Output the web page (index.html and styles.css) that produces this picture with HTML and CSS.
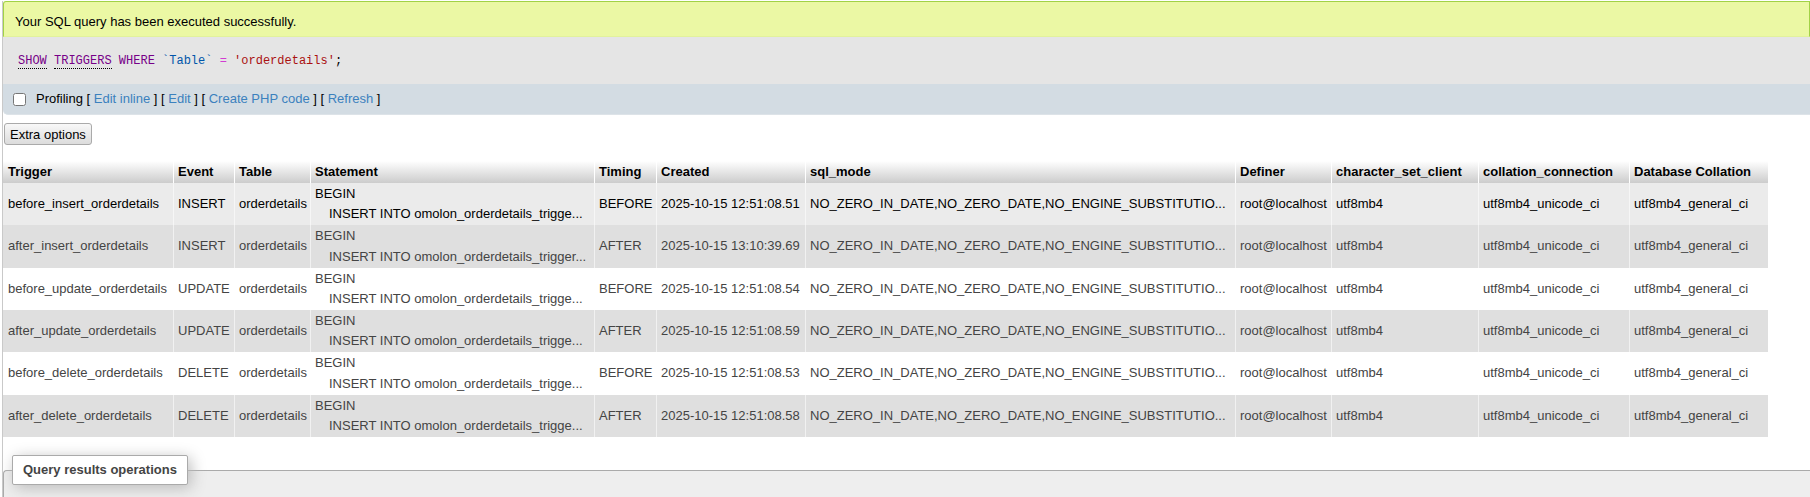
FILE: index.html
```html
<!DOCTYPE html>
<html lang="en">
<head>
<meta charset="utf-8">
<title>SHOW TRIGGERS</title>
<link rel="stylesheet" href="styles.css">
</head>
<body>
<div class="page">
  <div class="success">Your SQL query has been executed successfully.</div>
  <div class="sqlbox"><code><a class="doc kw">SHOW</a> <a class="doc kw">TRIGGERS</a> <span class="kw">WHERE</span> <span class="var">`Table`</span> <span class="op">=</span> <span class="str">'orderdetails'</span>;</code></div>
  <div class="toolbar">
    <input type="checkbox" class="chk">
    <span class="tools">Profiling [ <a class="lnk">Edit inline</a> ] [ <a class="lnk">Edit</a> ] [ <a class="lnk">Create PHP code</a> ] [ <a class="lnk">Refresh</a> ]</span>
  </div>
  <button class="btn" type="button">Extra options</button>
  <table class="data">
    <colgroup>
      <col class="c-trigger"><col class="c-event"><col class="c-table"><col class="c-stmt"><col class="c-timing"><col class="c-created"><col class="c-mode"><col class="c-definer"><col class="c-charset"><col class="c-coll"><col class="c-dbcoll">
    </colgroup>
    <thead>
      <tr><th>Trigger</th><th>Event</th><th>Table</th><th>Statement</th><th>Timing</th><th>Created</th><th>sql_mode</th><th>Definer</th><th>character_set_client</th><th>collation_connection</th><th>Database Collation</th></tr>
    </thead>
    <tbody>
      <tr class="hover">
        <td>before_insert_orderdetails</td><td>INSERT</td><td>orderdetails</td>
        <td class="stmt"><div>BEGIN</div><div class="ind">INSERT INTO omolon_orderdetails_trigge...</div></td>
        <td>BEFORE</td><td>2025-10-15 12:51:08.51</td><td>NO_ZERO_IN_DATE,NO_ZERO_DATE,NO_ENGINE_SUBSTITUTIO...</td><td>root@localhost</td><td>utf8mb4</td><td>utf8mb4_unicode_ci</td><td>utf8mb4_general_ci</td>
      </tr>
      <tr class="even">
        <td>after_insert_orderdetails</td><td>INSERT</td><td>orderdetails</td>
        <td class="stmt"><div>BEGIN</div><div class="ind">INSERT INTO omolon_orderdetails_trigger...</div></td>
        <td>AFTER</td><td>2025-10-15 13:10:39.69</td><td>NO_ZERO_IN_DATE,NO_ZERO_DATE,NO_ENGINE_SUBSTITUTIO...</td><td>root@localhost</td><td>utf8mb4</td><td>utf8mb4_unicode_ci</td><td>utf8mb4_general_ci</td>
      </tr>
      <tr class="odd">
        <td>before_update_orderdetails</td><td>UPDATE</td><td>orderdetails</td>
        <td class="stmt"><div>BEGIN</div><div class="ind">INSERT INTO omolon_orderdetails_trigge...</div></td>
        <td>BEFORE</td><td>2025-10-15 12:51:08.54</td><td>NO_ZERO_IN_DATE,NO_ZERO_DATE,NO_ENGINE_SUBSTITUTIO...</td><td>root@localhost</td><td>utf8mb4</td><td>utf8mb4_unicode_ci</td><td>utf8mb4_general_ci</td>
      </tr>
      <tr class="even">
        <td>after_update_orderdetails</td><td>UPDATE</td><td>orderdetails</td>
        <td class="stmt"><div>BEGIN</div><div class="ind">INSERT INTO omolon_orderdetails_trigge...</div></td>
        <td>AFTER</td><td>2025-10-15 12:51:08.59</td><td>NO_ZERO_IN_DATE,NO_ZERO_DATE,NO_ENGINE_SUBSTITUTIO...</td><td>root@localhost</td><td>utf8mb4</td><td>utf8mb4_unicode_ci</td><td>utf8mb4_general_ci</td>
      </tr>
      <tr class="odd">
        <td>before_delete_orderdetails</td><td>DELETE</td><td>orderdetails</td>
        <td class="stmt"><div>BEGIN</div><div class="ind">INSERT INTO omolon_orderdetails_trigge...</div></td>
        <td>BEFORE</td><td>2025-10-15 12:51:08.53</td><td>NO_ZERO_IN_DATE,NO_ZERO_DATE,NO_ENGINE_SUBSTITUTIO...</td><td>root@localhost</td><td>utf8mb4</td><td>utf8mb4_unicode_ci</td><td>utf8mb4_general_ci</td>
      </tr>
      <tr class="even">
        <td>after_delete_orderdetails</td><td>DELETE</td><td>orderdetails</td>
        <td class="stmt"><div>BEGIN</div><div class="ind">INSERT INTO omolon_orderdetails_trigge...</div></td>
        <td>AFTER</td><td>2025-10-15 12:51:08.58</td><td>NO_ZERO_IN_DATE,NO_ZERO_DATE,NO_ENGINE_SUBSTITUTIO...</td><td>root@localhost</td><td>utf8mb4</td><td>utf8mb4_unicode_ci</td><td>utf8mb4_general_ci</td>
      </tr>
    </tbody>
  </table>
  <fieldset class="ops">
    <legend>Query results operations</legend>
  </fieldset>
</div>
</body>
</html>
```
FILE: styles.css
```css
html, body {
  margin: 0;
  padding: 0;
  background: #fff;
}
body {
  font-family: "Liberation Sans", Arial, sans-serif;
  font-size: 13px;
  line-height: 20px;
  color: #000;
  overflow: hidden;
}
.page {
  margin-left: 2px;
  border-left: 1px solid #c9c9c9;
  min-height: 497px;
}
.success {
  margin-top: 1px;
  border: 1px solid #a2d246;
  border-bottom-color: #e2f29c;
  border-radius: 3px 0 0 0;
  background: #ebf8a4;
  padding: 10px 11px 4px;
  line-height: 20px;
}
.sqlbox {
  background: #e5e5e5;
  padding: 13px 14px 13px 15px;
  line-height: 20px;
}
.sqlbox code {
  font-family: "Liberation Mono", "DejaVu Sans Mono", monospace;
  font-size: 12px;
  color: #000;
}
.kw { color: #770088; }
.doc { border-bottom: 1px dotted #000; text-decoration: none; }
.var { color: #0055aa; }
.op { color: #d23cd2; }
.str { color: #aa1111; }
.toolbar {
  display: flex;
  align-items: center;
  background: #d3dce3;
  border-bottom: 1px solid #dde3e8;
  border-radius: 0 0 0 5px;
  padding: 5px 0 5px 10px;
  height: 20px;
}
.chk {
  margin: 0 10px 0 0;
  width: 13px;
  height: 13px;
}
.tools { line-height: 20px; }
.lnk { color: #3b81be; text-decoration: none; }
.btn {
  display: block;
  margin: 8px 0 0 1px;
  height: 22px;
  padding: 0 5px;
  font-family: "Liberation Sans", Arial, sans-serif;
  font-size: 13px;
  color: #000;
  border: 1px solid #aaa;
  border-radius: 3px;
  background: linear-gradient(#f8f8f8, #dcdcdc);
}
.data {
  margin-top: 16px;
  table-layout: fixed;
  width: 1765px;
  border-collapse: separate;
  border-spacing: 0;
}
.c-trigger { width: 171px; }
.c-event { width: 61px; }
.c-table { width: 76px; }
.c-stmt { width: 284px; }
.c-timing { width: 62px; }
.c-created { width: 149px; }
.c-mode { width: 430px; }
.c-definer { width: 96px; }
.c-charset { width: 147px; }
.c-coll { width: 151px; }
.c-dbcoll { width: 138px; }
.data th, .data td {
  padding: 1px 4px 1px 4px;
  text-align: left;
  white-space: nowrap;
  overflow: hidden;
  border-right: 1px solid rgba(255, 255, 255, 0.55);
}
.data th {
  line-height: 20px;
  font-weight: bold;
  color: #000;
  background: linear-gradient(#ffffff, #cccccc);
  border-right: 1px solid #fff;
}
.data td {
  line-height: 20.17px;
  vertical-align: middle;
  color: #444;
}
.data th:first-child, .data td:first-child { padding-left: 5px; }
.data th:last-child, .data td:last-child { border-right: 0; }
.data td.stmt { vertical-align: top; }
.ind { padding-left: 14px; }
.data tr.hover { background: #ebebeb; }
.data tr.hover td { color: #000; }
.data tr.even { background: #dfdfdf; }
.data tr.odd { background: #fff; }
.ops {
  margin: 18px 0 0 0;
  padding: 0 8px 80px 8px;
  border: 1px solid #aaa;
  border-right: 0;
  border-radius: 4px 0 0 0;
  background: #eee;
  min-width: 0;
}
.ops legend {
  font-weight: bold;
  color: #444;
  padding: 5px 10px;
  line-height: 18px;
  border: 1px solid #aaa;
  border-radius: 2px;
  background: #fff;
  box-shadow: 3px 3px 15px #bbb;
}
```
